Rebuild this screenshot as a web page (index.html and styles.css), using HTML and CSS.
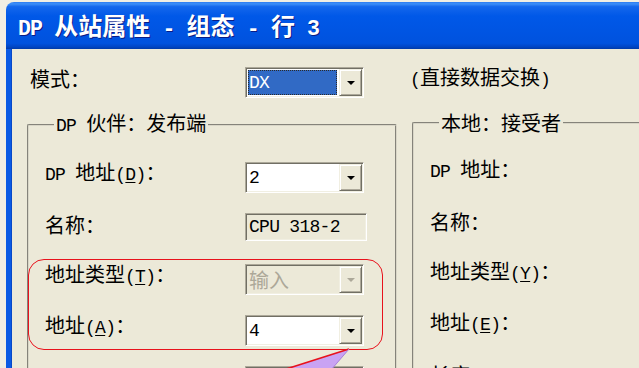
FILE: index.html
```html
<!DOCTYPE html>
<html lang="zh-CN">
<head>
<meta charset="utf-8">
<title>DP 从站属性 - 组态 - 行 3</title>
<link rel="stylesheet" href="styles.css">
</head>
<body>
<div class="window">
  <div class="titlebar">
    <span class="title"><span class="en">DP </span>从站属性<span class="en"> - </span>组态<span class="en"> - </span>行<span class="en"> 3</span></span>
  </div>
  <div class="client">
    <div class="moderow">
      <span class="label mode-label">模式：</span>
      <div class="combo">
        <div class="field focused"><span class="en">DX</span></div>
        <div class="btn"><span class="tri"></span></div>
      </div>
      <span class="desc"><span class="en">(</span>直接数据交换<span class="en">)</span></span>
    </div>
    <div class="groups">
      <fieldset class="group group-left">
        <legend><span class="en">DP </span>伙伴：发布端</legend>
        <div class="row">
          <span class="label"><span class="en">DP </span>地址<span class="en">(<u>D</u>)</span>：</span>
          <div class="combo">
            <div class="field"><span class="en">2</span></div>
            <div class="btn"><span class="tri"></span></div>
          </div>
        </div>
        <div class="row">
          <span class="label">名称：</span>
          <div class="edit"><span class="en">CPU 318-2</span></div>
        </div>
        <div class="row">
          <span class="label">地址类型<span class="en">(<u>T</u>)</span>：</span>
          <div class="combo disabled">
            <div class="field">输入</div>
            <div class="btn"><span class="tri"></span></div>
          </div>
        </div>
        <div class="row">
          <span class="label">地址<span class="en">(<u>A</u>)</span>：</span>
          <div class="combo">
            <div class="field"><span class="en">4</span></div>
            <div class="btn"><span class="tri"></span></div>
          </div>
        </div>
        <div class="row">
          <span class="label muted">长度：</span>
          <div class="combo disabled">
            <div class="field"></div>
            <div class="btn"><span class="tri"></span></div>
          </div>
        </div>
      </fieldset>
      <fieldset class="group group-right">
        <legend>本地：接受者</legend>
        <div class="row"><span class="label"><span class="en">DP </span>地址：</span></div>
        <div class="row"><span class="label">名称：</span></div>
        <div class="row"><span class="label">地址类型<span class="en">(<u>Y</u>)</span>：</span></div>
        <div class="row"><span class="label">地址<span class="en">(<u>E</u>)</span>：</span></div>
        <div class="row"><span class="label">长度：</span></div>
      </fieldset>
    </div>
  </div>
</div>
<div class="mark"></div>
<svg class="callout" width="639" height="368" viewBox="0 0 639 368">
  <polygon points="349,349 283,370 331,370" fill="#C9A3F3"/>
  <line x1="349" y1="349" x2="283" y2="370" stroke="#E8121C" stroke-width="1.6"/>
  <line x1="349" y1="349" x2="331" y2="370" stroke="#A87FDA" stroke-width="1"/>
</svg>
</body>
</html>
```

FILE: styles.css
```css
html, body {
  margin: 0;
  padding: 0;
}

body {
  width: 639px;
  height: 368px;
  overflow: hidden;
  position: relative;
  background: #F1EEE3;
  font-family: "Noto Sans CJK SC", "Noto Sans", sans-serif;
  font-size: 20px;
  color: #000;
}

.en {
  font-family: "Liberation Mono", "DejaVu Sans Mono", monospace;
  font-size: 0.9em;
  letter-spacing: -0.04em;
}

u {
  text-decoration: underline;
  text-underline-offset: 2px;
}

.window {
  margin: 2px 0 0 6px;
  width: 720px;
}

.titlebar {
  height: 47px;
  box-sizing: border-box;
  padding: 3px 0 0 12px;
  display: flex;
  align-items: center;
  border-radius: 8px 0 0 0;
  background: linear-gradient(to bottom,
    #2C7CF2 0%, #3D8FF8 4%, #1467EC 10%, #0058E8 30%,
    #0055E3 60%, #0052DE 88%, #0046C6 95%, #003AA8 100%);
  color: #fff;
  font-weight: bold;
  font-size: 24px;
  line-height: 28px;
  text-shadow: 1px 1px 0 #0A1C86;
}

.title {
  white-space: pre;
}

.client {
  height: 330px;
  box-sizing: border-box;
  background: #ECE9D8;
  border-left: 5px solid #0B5AE4;
  box-shadow: inset 1px 0 0 #0848C8;
  padding: 18px 0 0 16px;
}

.moderow {
  display: flex;
  align-items: center;
  height: 31px;
  padding-left: 3px;
}

.label {
  line-height: 24px;
  white-space: pre;
}

.mode-label {
  width: 215px;
  margin-bottom: 8px;
}

.desc {
  margin-left: 46px;
  margin-bottom: 8px;
  line-height: 24px;
}

.groups {
  display: flex;
  gap: 15px;
  margin-top: 13px;
}

.group {
  margin: 0;
  padding: 10px 0 0 16px;
  border: 2px groove #D9D6C7;
  border-radius: 2px;
  min-width: 0;
  flex-shrink: 0;
  box-sizing: border-box;
}

.group-left {
  width: 370px;
}

.group-right {
  width: 320px;
}

legend {
  margin-left: 9px;
  padding: 0 2px;
  line-height: 24px;
  white-space: pre;
}

.row {
  display: flex;
  align-items: center;
  height: 51px;
}

.row .label {
  width: 200px;
  flex-shrink: 0;
}

.muted {
  color: #ACA899;
}

/* classic sunken combo box */
.combo {
  width: 119px;
  height: 31px;
  box-sizing: border-box;
  display: flex;
  padding: 1px;
  border: 1px solid;
  border-color: #ACA899 #FFFFFF #FFFFFF #ACA899;
  box-shadow: inset 1px 1px 0 #716F64, inset -1px -1px 0 #F1EFE2;
  background: #fff;
  flex-shrink: 0;
}

.row .combo {
  margin-top: 8px;
}

.field {
  flex: 1;
  display: flex;
  align-items: center;
  padding-left: 2px;
  line-height: 24px;
}

.field.focused {
  margin: 1px 2px 1px 1px;
  padding-left: 1px;
  background: #316AC5;
  color: #fff;
  outline: 1px dotted #2a2a2a;
  outline-offset: -1px;
}

.btn {
  width: 23px;
  box-sizing: border-box;
  display: flex;
  align-items: center;
  justify-content: center;
  background: #ECE9D8;
  border: 1px solid;
  border-color: #F1EFE2 #716F64 #716F64 #F1EFE2;
  box-shadow: inset 1px 1px 0 #FFFFFF, inset -1px -1px 0 #ACA899;
}

.tri {
  width: 0;
  height: 0;
  border-left: 4px solid transparent;
  border-right: 4px solid transparent;
  border-top: 4px solid #000;
  margin-top: 1px;
}

.combo.disabled {
  background: #ECE9D8;
  color: #ACA899;
}

.combo.disabled .tri {
  border-top-color: #ACA899;
}

.edit {
  width: 122px;
  height: 28px;
  box-sizing: border-box;
  display: flex;
  align-items: center;
  padding: 1px 1px 1px 3px;
  border: 1px solid;
  border-color: #ACA899 #FFFFFF #FFFFFF #ACA899;
  box-shadow: inset 1px 1px 0 #716F64, inset -1px -1px 0 #F1EFE2;
  background: #ECE9D8;
  margin-top: 5px;
  flex-shrink: 0;
}

/* annotation overlays */
.mark {
  position: absolute;
  left: 28px;
  top: 259px;
  width: 355px;
  height: 91px;
  box-sizing: border-box;
  border: 1.5px solid #E8121C;
  border-radius: 16px;
}

.callout {
  position: absolute;
  left: 0;
  top: 0;
  pointer-events: none;
}
```
